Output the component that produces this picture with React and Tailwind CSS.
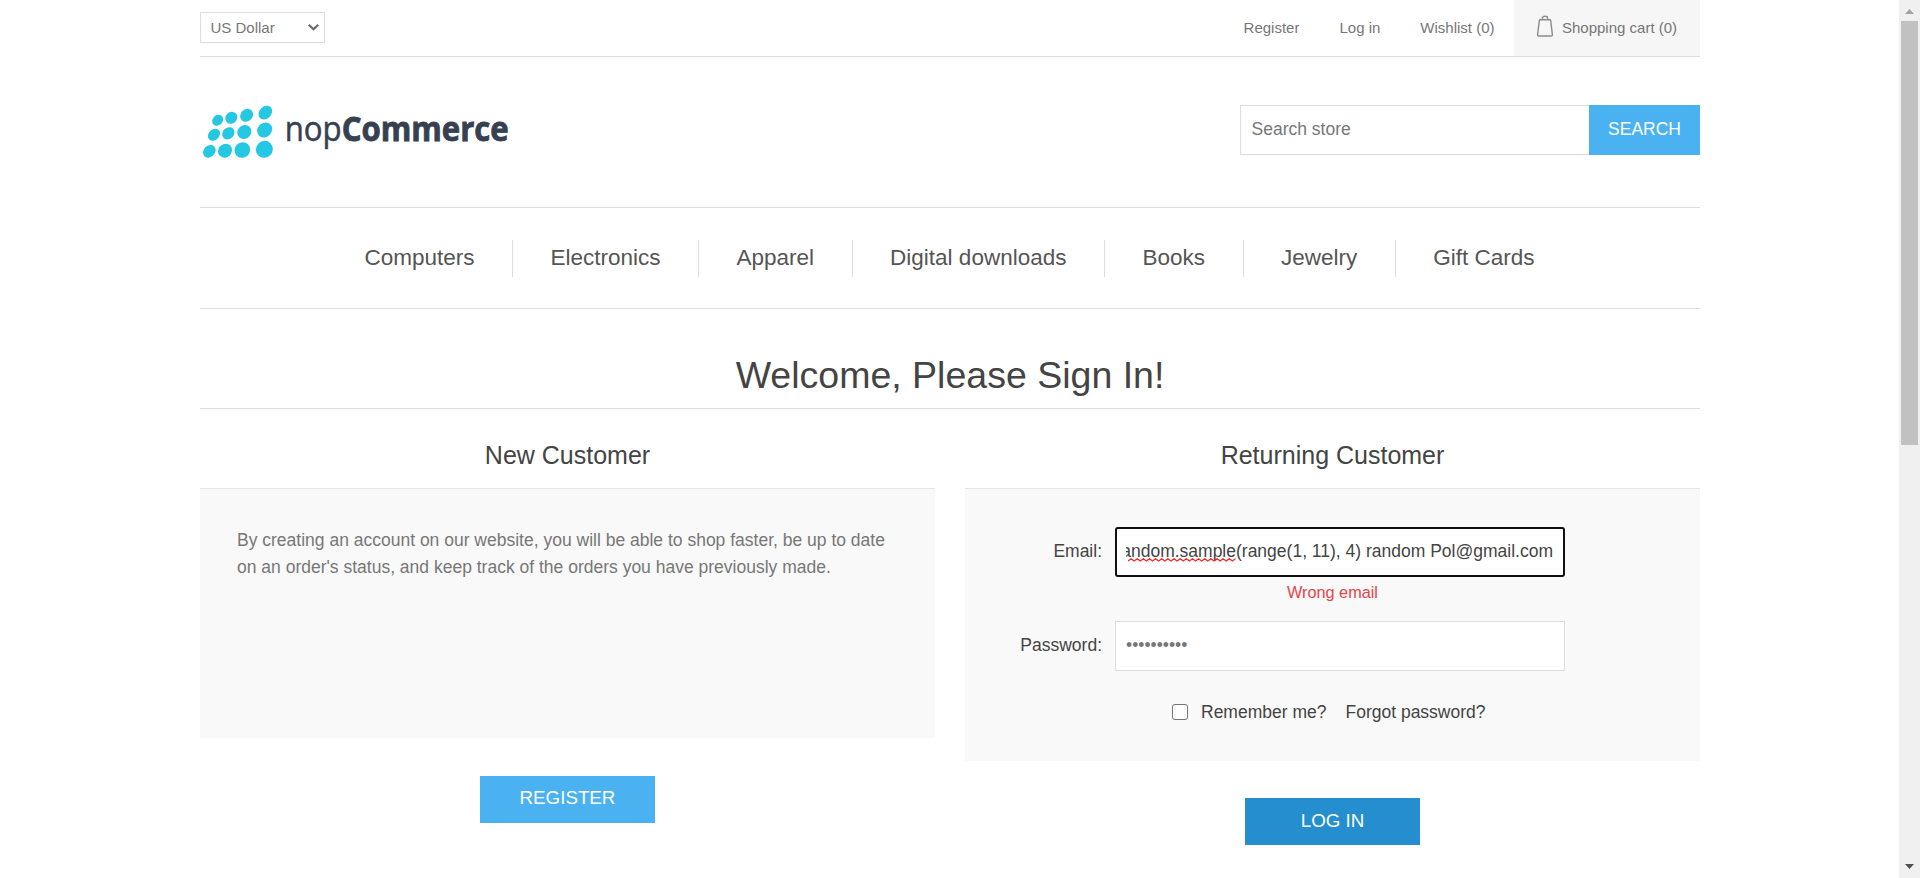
const NAV = ['Computers', 'Electronics', 'Apparel', 'Digital downloads', 'Books', 'Jewelry', 'Gift Cards'];

// cx, cy, rx, ry for each dot of the logo mark
const DOTS = [
  [83, 361, 18, 15], [124, 353, 19, 17], [170, 346, 21, 18], [226, 338, 23, 18],
  [72, 404, 20, 16], [115, 400, 20, 17], [163, 396, 22, 20], [224, 390, 24, 21],
  [58, 454, 21, 17], [105, 452, 22, 20], [157, 450, 24, 23], [223, 448, 26, 25],
];

function Logo() {
  return (
    <svg width="313" height="63" viewBox="30 300 939 189" className="block overflow-visible">
      {DOTS.map(([cx, cy, rx, ry]) => (
        <ellipse key={cx} cx={cx} cy={cy} rx={rx} ry={ry} fill="#24c8e2" transform={`rotate(-45 ${cx} ${cy})`} />
      ))}
      <g fill="#364050" stroke="#364050" fontFamily="'Open Sans', sans-serif">
        <text x="284" y="423" fontSize="103" strokeWidth="1.5" textLength="171" lengthAdjust="spacingAndGlyphs">nop</text>
        <text x="455" y="423" fontSize="103" strokeWidth="2.5" fontWeight="700" textLength="501" lengthAdjust="spacingAndGlyphs">Commerce</text>
      </g>
    </svg>
  );
}

function Squiggle() {
  const points = [];
  for (let i = 0; i <= 35; i++) points.push(`${(i * 3.07).toFixed(2)},${i % 2 ? 0.8 : 3}`);
  return (
    <svg width="109" height="4" className="absolute left-[11px] top-[29px]" viewBox="0 0 109 4">
      <polyline points={points.join(' ')} fill="none" stroke="#ff2020" strokeWidth="1.2" />
    </svg>
  );
}

function Scrollbar() {
  return (
    <div className="flex h-[878px] w-[21px] flex-col items-center bg-[#f0f0f0]">
      <svg width="21" height="21" className="block"><path d="M6 14L10.5 9L15 14Z" fill="#a3a3a3" /></svg>
      <div className="h-[424px] w-[17px] bg-[#c1c1c1]" />
      <div className="grow" />
      <svg width="21" height="21" className="block"><path d="M6 7L10.5 12L15 7Z" fill="#505050" /></svg>
    </div>
  );
}

export default function App() {
  return (
    <div className="flex h-[878px] w-[1920px] overflow-hidden bg-white font-['Liberation_Sans',Arial,sans-serif] text-[17.5px] text-[#777]">
      <div className="w-[1899px] pl-[200px]">
        <div className="w-[1500px]">
          <div className="flex h-[57px] justify-between border-b border-[#ddd] text-[15px]">
            <div className="mt-3 flex h-[31px] w-[125px] items-center justify-between border border-[#ddd] pl-[9.5px] pr-[4px] leading-none">
              <span className="pb-px">US Dollar</span>
              <svg width="13" height="9" viewBox="0 0 13 9"><path d="M1.8 1.8L6.5 6.3L11.2 1.8" fill="none" stroke="#6a6a6a" strokeWidth="2.2" /></svg>
            </div>
            <div className="flex h-14 items-center leading-[20px]">
              <a className="mr-10">Register</a>
              <a className="mr-10">Log in</a>
              <a className="mr-[19.5px]">Wishlist (0)</a>
              <div className="flex h-14 w-[186px] items-center bg-[#f6f6f6] pl-[22px]">
                <svg width="18" height="22" viewBox="0 0 18 22" className="mr-2 mb-[4px]">
                  <path d="M4.2 4.8H13.8Q14.5 4.8 14.7 5.6L16.4 19.6Q16.5 21 15.3 21H2.7Q1.5 21 1.6 19.6L3.3 5.6Q3.5 4.8 4.2 4.8ZM6.4 4.8V3Q6.4 1.3 9 1.3Q11.6 1.3 11.6 3V4.8" fill="none" stroke="#8c8c8c" strokeWidth="1.4" />
                </svg>
                <span>Shopping cart (0)</span>
              </div>
            </div>
          </div>

          <div className="flex h-[151px] justify-between border-b border-[#ddd]">
            <div className="pt-[43px]"><Logo /></div>
            <div className="mt-12 flex h-[50px] w-[460px]">
              <div className="grow border border-r-0 border-[#ddd] pl-[10.5px] leading-[46px]">Search store</div>
              <button className="w-[111px] bg-[#4ab2f1] pb-0.5 text-white">SEARCH</button>
            </div>
          </div>

          <nav className="flex h-[101px] items-center justify-center border-b border-[#ddd] pr-px text-[22.5px] text-[#555]">
            {NAV.map((label) => (
              <a key={label} className="h-[37px] border-r border-[#ddd] px-[37.5px] leading-[36px] last:border-r-0">{label}</a>
            ))}
          </nav>

          <h1 className="h-[100px] border-b border-[#ddd] pt-[45px] text-center text-[37.5px] leading-[43px] text-[#444]">
            Welcome, Please Sign In!
          </h1>

          <div className="flex justify-between">
            <section className="flex w-[735px] flex-col items-center">
              <h2 className="h-[79px] pt-[32px] text-[25px] leading-[28px] text-[#444]">New Customer</h2>
              <div className="h-[250px] w-full border-t border-[#e6e6e6] bg-[#f9f9f9] px-[37px] pt-[38px] leading-[27px]">
                By creating an account on our website, you will be able to shop faster, be up to date
                <br />
                on an order's status, and keep track of the orders you have previously made.
              </div>
              <button className="mt-[38px] h-[47px] w-[175px] bg-[#4ab2f1] pb-0.5 text-[18.75px] text-white">REGISTER</button>
            </section>

            <section className="flex w-[735px] flex-col items-center">
              <h2 className="h-[79px] pt-[32px] text-[25px] leading-[28px] text-[#444]">Returning Customer</h2>
              <div className="h-[273px] w-full border-t border-[#e6e6e6] bg-[#f9f9f9] pt-[38px] text-[#444]">
                <div className="flex h-[50px]">
                  <label className="w-[150px] pr-[13px] text-right leading-[49px]">Email:</label>
                  <div className="relative w-[450px] rounded-[3px] border-2 border-[#101010] bg-white pl-[9px] pr-[10px]">
                    <div className="flex justify-end overflow-hidden whitespace-nowrap leading-[45px]">
                      <span>random.sample(range(1, 11), 4) random Pol@gmail.com</span>
                    </div>
                    <Squiggle />
                  </div>
                </div>
                <div className="h-[44px] pt-[4px] text-center text-[16.25px] leading-[22px] text-[#e4434b]">Wrong email</div>
                <div className="flex h-[50px]">
                  <label className="w-[150px] pr-[13px] text-right leading-[49px]">Password:</label>
                  <div className="w-[450px] border border-[#ddd] bg-white pl-[10px] leading-[47px] text-[#777]">••••••••••</div>
                </div>
                <div className="mt-[30px] flex h-[22px] items-center pl-[207px]">
                  <span className="mr-[13px] h-4 w-4 rounded-[3px] border border-[#767676] bg-white" />
                  <span className="mr-[19px]">Remember me?</span>
                  <a>Forgot password?</a>
                </div>
              </div>
              <button className="mt-[37px] h-[47px] w-[175px] bg-[#248ece] text-[18.75px] text-white">LOG IN</button>
            </section>
          </div>
        </div>
      </div>
      <Scrollbar />
    </div>
  );
}
